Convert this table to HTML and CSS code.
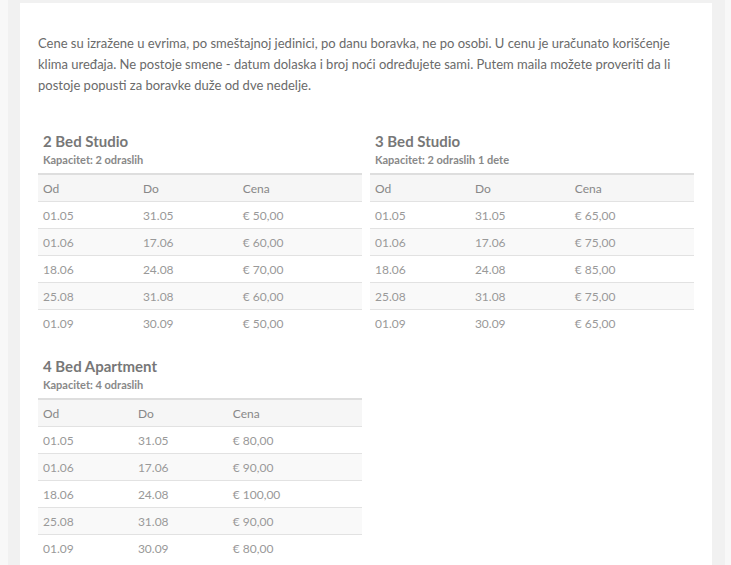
FILE: index.html
```html
<!DOCTYPE html>
<html lang="sr">
<head>
<meta charset="utf-8">
<title>Cene</title>
<link rel="stylesheet" href="styles.css">
</head>
<body>
<div class="frame">
  <div class="card">
    <p class="intro">Cene su izražene u evrima, po smeštajnoj jedinici, po danu boravka, ne po osobi. U cenu je uračunato korišćenje klima uređaja. Ne postoje smene - datum dolaska i broj noći određujete sami. Putem maila možete proveriti da li postoje popusti za boravke duže od dve nedelje.</p>
    <div class="grid">
      <section class="unit">
        <h3 class="unit-title">2 Bed Studio</h3>
        <div class="unit-cap">Kapacitet: 2 odraslih</div>
        <table class="prices">
          <thead><tr><th>Od</th><th>Do</th><th>Cena</th></tr></thead>
          <tbody>
            <tr><td>01.05</td><td>31.05</td><td>€ 50,00</td></tr>
            <tr><td>01.06</td><td>17.06</td><td>€ 60,00</td></tr>
            <tr><td>18.06</td><td>24.08</td><td>€ 70,00</td></tr>
            <tr><td>25.08</td><td>31.08</td><td>€ 60,00</td></tr>
            <tr><td>01.09</td><td>30.09</td><td>€ 50,00</td></tr>
          </tbody>
        </table>
      </section>
      <section class="unit">
        <h3 class="unit-title">3 Bed Studio</h3>
        <div class="unit-cap">Kapacitet: 2 odraslih 1 dete</div>
        <table class="prices">
          <thead><tr><th>Od</th><th>Do</th><th>Cena</th></tr></thead>
          <tbody>
            <tr><td>01.05</td><td>31.05</td><td>€ 65,00</td></tr>
            <tr><td>01.06</td><td>17.06</td><td>€ 75,00</td></tr>
            <tr><td>18.06</td><td>24.08</td><td>€ 85,00</td></tr>
            <tr><td>25.08</td><td>31.08</td><td>€ 75,00</td></tr>
            <tr><td>01.09</td><td>30.09</td><td>€ 65,00</td></tr>
          </tbody>
        </table>
      </section>
      <section class="unit">
        <h3 class="unit-title">4 Bed Apartment</h3>
        <div class="unit-cap">Kapacitet: 4 odraslih</div>
        <table class="prices">
          <thead><tr><th>Od</th><th>Do</th><th>Cena</th></tr></thead>
          <tbody>
            <tr><td>01.05</td><td>31.05</td><td>€ 80,00</td></tr>
            <tr><td>01.06</td><td>17.06</td><td>€ 90,00</td></tr>
            <tr><td>18.06</td><td>24.08</td><td>€ 100,00</td></tr>
            <tr><td>25.08</td><td>31.08</td><td>€ 90,00</td></tr>
            <tr><td>01.09</td><td>30.09</td><td>€ 80,00</td></tr>
          </tbody>
        </table>
      </section>
    </div>
  </div>
</div>
</body>
</html>
```

FILE: styles.css
```css
html, body {
  margin: 0;
  padding: 0;
}
body {
  background: #f8f8f8;
  font-family: Lato, "Open Sans", sans-serif;
  color: #666;
}
.frame {
  margin: 0 6px 0 8px;
  padding: 3px 13px 0 12px;
  background: #f1f1f1;
  height: 565px;
  box-sizing: border-box;
  overflow: hidden;
}
.card {
  background: #fff;
  padding: 30px 18px 0 18px;
  height: 100%;
  box-sizing: border-box;
}
.intro {
  margin: 0;
  font-size: 13px;
  line-height: 21px;
  color: #6a6a6a;
}
.grid {
  display: grid;
  grid-template-columns: 1fr 1fr;
  column-gap: 8px;
  row-gap: 20px;
  margin-top: 35px;
}
.unit-title {
  margin: 0;
  padding-left: 5px;
  font-size: 15px;
  line-height: 20px;
  font-weight: 700;
  color: #777;
}
.unit-cap {
  padding-left: 5px;
  font-size: 11px;
  line-height: 17px;
  font-weight: 700;
  color: #888;
  margin-bottom: 5px;
}
.prices {
  width: 100%;
  border-collapse: collapse;
  font-size: 12px;
}
.prices th,
.prices td {
  text-align: left;
  padding: 0 5px;
  height: 26px;
  border-top: 1px solid #e2e2e2;
  color: #999;
  font-weight: 400;
}
.prices th {
  border-top: 2px solid #dedede;
  background: #f6f6f6;
  color: #888;
}
.prices tbody tr:nth-child(even) td {
  background: #f9f9f9;
}
```
